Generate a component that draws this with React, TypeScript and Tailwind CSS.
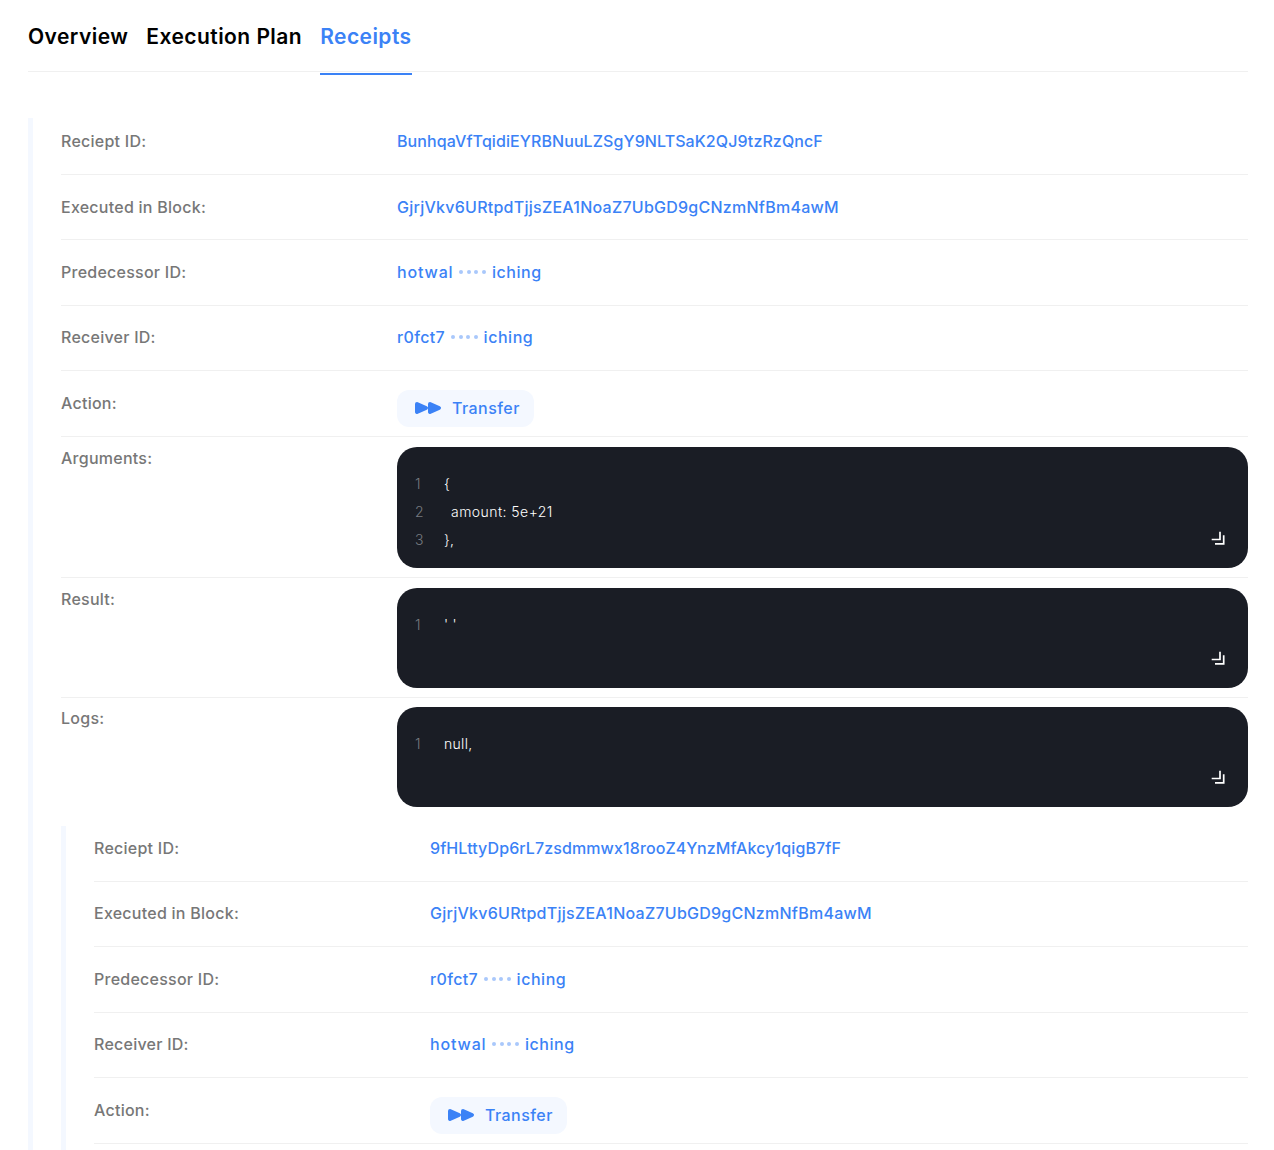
import React from 'react';

const font = { fontFamily: 'Inter, "Liberation Sans", sans-serif' };

const PlayIcon = () => (
  <svg width="28" height="14" viewBox="0 0 28 14" fill="#3b82f6" stroke="#3b82f6" strokeWidth="4" strokeLinejoin="round">
    <path d="M3 3L12 7 3 11z" />
    <path d="M16 3L25 7 16 11z" />
  </svg>
);

const ExpandIcon = () => (
  <svg width="16" height="16" viewBox="0 0 16 16" fill="none" stroke="#fff" strokeWidth="1.7" className="absolute right-[22px] bottom-[22px]">
    <path d="M1.7 9.5H10V1.7" />
    <path d="M5 13.9h8.7V5.3" />
  </svg>
);

const labelClass = 'w-[336px] shrink-0 text-base leading-6 font-medium tracking-[0.25px] text-[#777777]';

const Row = ({ label, first, nested, action, children }: { label: string; first?: boolean; nested?: boolean; action?: boolean; children: React.ReactNode }) => {
  let size = action ? 'h-[66px] pt-[19.7px]' : 'h-[65.4px] pt-[19.7px]';
  if (first) size = nested ? 'h-[55.7px] pt-[10px]' : 'h-[56.9px] pt-[11px]';
  return (
    <div className={`flex border-b border-[#f0f0f0] ${size}`}>
      <div className={labelClass}>{label}</div>
      <div className="text-base leading-6 font-medium text-[#3b82f6]">{children}</div>
    </div>
  );
};

const Account = ({ start, wide }: { start: string; wide?: boolean }) => (
  <span className="flex items-center">
    <span className={wide ? 'tracking-[0.85px]' : 'tracking-[0.35px]'}>{start}</span>
    <span className="mx-[6px] flex gap-[3.5px]">
      <i className="w-1 h-1 rounded-full bg-[#a9c8fb]" />
      <i className="w-1 h-1 rounded-full bg-[#a9c8fb]" />
      <i className="w-1 h-1 rounded-full bg-[#a9c8fb]" />
      <i className="w-1 h-1 rounded-full bg-[#a9c8fb]" />
    </span>
    <span className="tracking-[0.55px]">iching</span>
  </span>
);

const Transfer = () => (
  <div className="flex items-center h-[37px] w-[137px] -mt-[1px] pl-[17px] pb-[1px] gap-[10px] rounded-xl bg-[#f4f8ff] tracking-[0.45px]">
    <PlayIcon />
    Transfer
  </div>
);

const Code = ({ lines, tall }: { lines: string[]; tall?: boolean }) => (
  <div className={tall ? 'relative flex-1 h-[121px] rounded-[20px] bg-[#1a1d25] pt-[23px] pl-[18px]' : 'relative flex-1 h-[100px] rounded-[20px] bg-[#1a1d25] pt-[23px] pl-[18px]'}>
    {lines.map((line, i) => (
      <div key={i} className="flex h-7 items-center text-sm font-light">
        <span className="w-[29px] text-[#777b80]">{i + 1}</span>
        <span className={line.startsWith('amount') ? 'pl-[7px] tracking-[0.45px] text-white' : 'whitespace-pre tracking-[0.3px] text-white'}>{line}</span>
      </div>
    ))}
    <ExpandIcon />
  </div>
);

const CodeRow = ({ label, lines, tall }: { label: string; lines: string[]; tall?: boolean }) => (
  <div className="flex border-b border-[#f0f0f0] pt-[10px] pb-[9px]">
    <div className={`${labelClass} -mt-[1px]`}>{label}</div>
    <Code lines={lines} tall={tall} />
  </div>
);

export default function App() {
  return (
    <div className="h-[1150px] overflow-hidden bg-white pl-7 pr-[26px]" style={font}>
      <div className="flex h-[72px] gap-[18px] border-b border-[#f0f0f0]">
        <div className="h-[75px] pt-[22px] text-[21px] leading-[30px] font-semibold tracking-[0.45px] text-black">Overview</div>
        <div className="h-[75px] pt-[22px] text-[21px] leading-[30px] font-semibold tracking-[0.45px] text-black">Execution Plan</div>
        <div className="h-[75px] pt-[22px] text-[21px] leading-[30px] font-semibold tracking-[0.45px] text-[#3b82f6] border-b-2 border-[#3b82f6]">Receipts</div>
      </div>

      <div className="mt-[46px] border-l-[5px] border-[#f4f8ff] pl-7">
        <Row label="Reciept ID:" first><span className="tracking-[0.08px]">BunhqaVfTqidiEYRBNuuLZSgY9NLTSaK2QJ9tzRzQncF</span></Row>
        <Row label="Executed in Block:"><span className="tracking-[0.25px]">GjrjVkv6URtpdTjjsZEA1NoaZ7UbGD9gCNzmNfBm4awM</span></Row>
        <Row label="Predecessor ID:"><Account start="hotwal" wide /></Row>
        <Row label="Receiver ID:"><Account start="r0fct7" /></Row>
        <Row label="Action:" action><Transfer /></Row>
        <CodeRow label="Arguments:" tall lines={['{', 'amount: 5e+21', '},']} />
        <CodeRow label="Result:" lines={["' '"]} />
        <div className="flex pt-[9px]">
          <div className={`${labelClass} -mt-[1px]`}>Logs:</div>
          <Code lines={['null,']} />
        </div>

        <div className="mt-[19px] pb-10 border-l-[5px] border-[#f4f8ff] pl-7">
          <Row label="Reciept ID:" first nested><span className="tracking-[0.1px]">9fHLttyDp6rL7zsdmmwx18rooZ4YnzMfAkcy1qigB7fF</span></Row>
          <Row label="Executed in Block:"><span className="tracking-[0.25px]">GjrjVkv6URtpdTjjsZEA1NoaZ7UbGD9gCNzmNfBm4awM</span></Row>
          <Row label="Predecessor ID:"><Account start="r0fct7" /></Row>
          <Row label="Receiver ID:"><Account start="hotwal" wide /></Row>
          <Row label="Action:" action><Transfer /></Row>
        </div>
      </div>
    </div>
  );
}
